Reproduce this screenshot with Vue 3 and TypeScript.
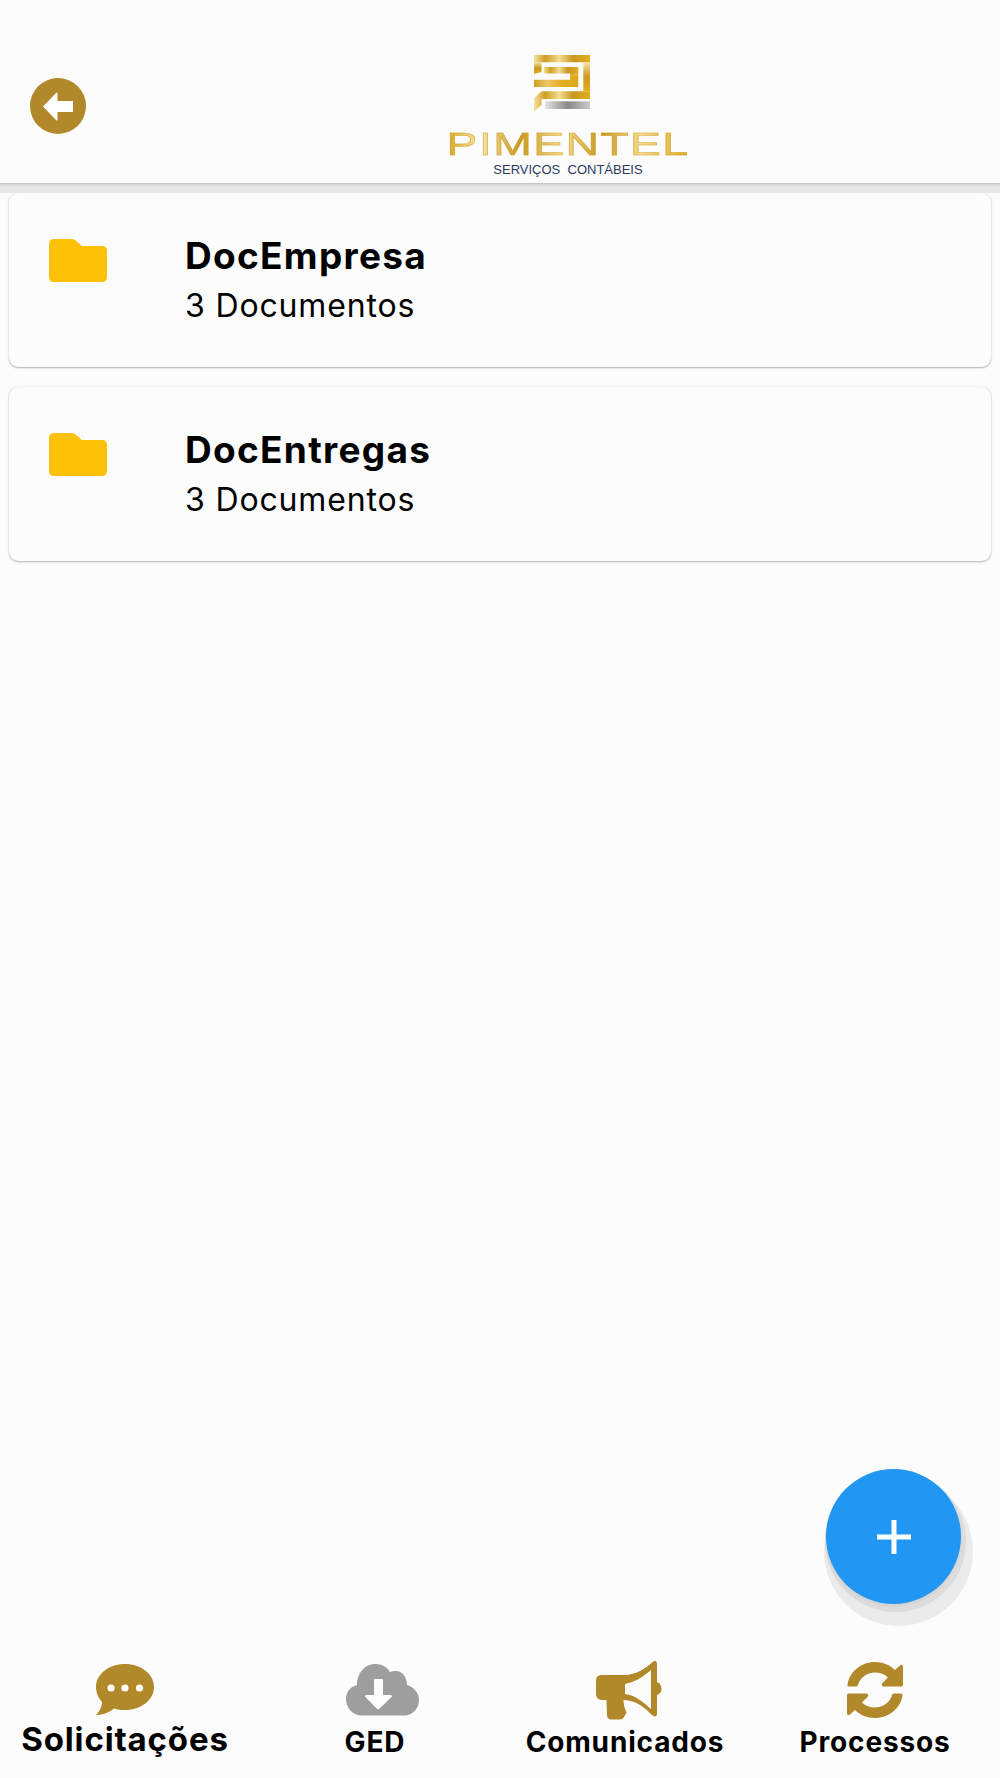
<script setup lang="ts">
interface Folder { name: string; count: string }
interface Tab { label: string; icon: string; active?: boolean }

const folders: Folder[] = [
  { name: 'DocEmpresa', count: '3 Documentos' },
  { name: 'DocEntregas', count: '3 Documentos' },
]

const tabs: Tab[] = [
  { label: 'Solicitações', icon: 'chat', active: true },
  { label: 'GED', icon: 'cloud' },
  { label: 'Comunicados', icon: 'horn' },
  { label: 'Processos', icon: 'sync' },
]
</script>

<template>
  <div class="screen">
    <header class="topbar">
      <button class="back" aria-label="Voltar">
        <svg viewBox="0 0 56 56" width="56" height="56">
          <circle cx="28" cy="28" r="28" fill="#b1882a" />
          <path d="M13 28.500 L26 15 Q27.500 13.500 27.500 16 V23 H43 V34 H27.500 V41 Q27.500 43.500 26 42 Z" fill="#fff" />
        </svg>
      </button>
      <div class="logo">
        <svg class="mark" viewBox="0 0 56 57" width="56" height="57">
          <defs>
            <linearGradient id="gold" x1="0" y1="0" x2="1" y2="0">
              <stop offset="0" stop-color="#f6e3a4" />
              <stop offset="0.2" stop-color="#cf9e22" />
              <stop offset="0.45" stop-color="#f3dc94" />
              <stop offset="0.7" stop-color="#c9981f" />
              <stop offset="1" stop-color="#e3ae22" />
            </linearGradient>
            <linearGradient id="goldB" x1="0" y1="0" x2="1" y2="0">
              <stop offset="0" stop-color="#cf9e22" />
              <stop offset="0.3" stop-color="#ecc867" />
              <stop offset="0.6" stop-color="#e3ae22" />
              <stop offset="1" stop-color="#e0a91c" />
            </linearGradient>
            <linearGradient id="goldV" x1="0" y1="0" x2="0" y2="1">
              <stop offset="0" stop-color="#f5e3a6" />
              <stop offset="0.5" stop-color="#c9981f" />
              <stop offset="1" stop-color="#e3ae22" />
            </linearGradient>
            <linearGradient id="silver" x1="0" y1="0" x2="1" y2="0">
              <stop offset="0" stop-color="#e4e4e4" />
              <stop offset="0.5" stop-color="#8a8a8a" />
              <stop offset="1" stop-color="#c8c8c8" />
            </linearGradient>
          </defs>
          <rect x="0" y="0" width="56" height="7.300" fill="url(#gold)" />
          <path fill="url(#goldV)" d="M0 7.300 H7.500 V17 L0 19 Z" />
          <path fill="url(#gold)" d="M9.500 12 H44.300 V19.700 H36 V18.500 H9.500 Z" />
          <path fill="url(#goldB)" d="M0 24.700 H36 V19.700 H44.300 V32 H0 Z" />
          <path fill="url(#goldV)" d="M49.300 7.300 H56 V36.300 H49.300 Z" />
          <path fill="url(#gold)" d="M7.500 36.300 H56 V44 H7.500 V50 L0 56.500 V43 Z" />
          <rect x="11" y="46.300" width="45" height="7.700" fill="url(#silver)" />
        </svg>
        <div class="brand">PIMENTEL</div>
        <div class="tagline">SERVIÇOS&nbsp; CONTÁBEIS</div>
      </div>
    </header>

    <main class="list">
      <article v-for="f in folders" :key="f.name" class="card">
        <svg class="folder" viewBox="0 0 58 43" width="58" height="43">
          <path d="M5 0 H23 Q25 0 26.500 1.500 L33 7 H53 Q58 7 58 12 V38 Q58 43 53 43 H5 Q0 43 0 38 V5 Q0 0 5 0 Z" fill="#ffc107" />
        </svg>
        <div class="text">
          <div class="name">{{ f.name }}</div>
          <div class="count">{{ f.count }}</div>
        </div>
      </article>
    </main>

    <button class="fab" aria-label="Adicionar">
      <svg viewBox="0 0 34 34" width="34" height="34">
        <path d="M14.500 0 H19.500 V14.500 H34 V19.500 H19.500 V34 H14.500 V19.500 H0 V14.500 H14.500 Z" fill="#fff" />
      </svg>
    </button>

    <nav class="tabs">
      <div v-for="t in tabs" :key="t.label" class="tab" :class="{ active: t.active, ['tab-' + t.icon]: true }">
        <svg v-if="t.icon === 'chat'" viewBox="0 0 58 52" width="58" height="52">
          <path d="M29 0 C45 0 58 10 58 23 C58 36 45 46 29 46 C25 46 21.500 45.500 18 44.500 C13 48.500 7 51 0 51 C3 48 5.500 44 6 38 C2.500 34 0 29 0 23 C0 10 13 0 29 0 Z" fill="#b1882a" />
          <circle cx="15" cy="24" r="3.600" fill="#fff" />
          <circle cx="29" cy="24" r="3.600" fill="#fff" />
          <circle cx="43.500" cy="24" r="3.600" fill="#fff" />
        </svg>
        <svg v-else-if="t.icon === 'cloud'" viewBox="0 0 73 52" width="73" height="52">
          <path d="M16 51.500 C7 51.500 0 44 0 35 C0 28 4 23 11 21 C11 9 19 0 29 0 C36 0 41 3 44 8 C46 7 48 7 50 7 C56 7 61 13 61 21 C68 23 73 29 73 36 C73 44 67 51.500 58 51.500 Z" fill="#9e9e9e" />
          <path d="M28 16 Q28 15 29 15 H36 Q37 15 37 16 V31 H44 Q47 31 45.500 33 L33.500 44.500 Q32 46 30.500 44.500 L19.500 33 Q18 31 21 31 H28 Z" fill="#fff" />
        </svg>
        <svg v-else-if="t.icon === 'horn'" viewBox="0 0 66 59" width="66" height="59">
          <path fill-rule="evenodd" d="M58 0 C60 -1 61 1 61 3 V21 C64 22 65.500 25 65.500 28 C65.500 31 64 33 61 34 V53 C61 56 58 56 56 54 C49 47 41 40 29 39 L27.500 39 C27.500 43 28.500 47 30 50 C31 52 30 53 29 54 C28 57 26 58.500 24 58.500 H15 C12 58.500 11 56 11 54 L10.500 39 H6 C2 39 0 36 0 33 V20 C0 16 2 14 6 14 H28 C40 14 50 7 58 0 Z M55 9 C47 16 39 21 29 23 V33 C39 34 47 41 55 48 Z" fill="#b1882a" />
        </svg>
        <svg v-else viewBox="0 0 56 56" width="56" height="56">
          <path d="M0.500 23 C2 10 14 0 28 0 C36 0 43 3 48 8 L53 3.500 C54.500 2 56 3 56 5 V23 Q56 24.500 54 24.500 H37 C35 24.500 34 22.500 35.500 21 L41 15.500 C37.500 12 33 10.500 28 10.500 C20 10.500 13 15.500 11 23 Q10.500 24.500 9 24.500 H2 Q0.300 24.500 0.500 23 Z" fill="#b1882a" />
          <path d="M55.500 33 C54 46 42 56 28 56 C20 56 13 53 8 48 L3 52.500 C1.500 54 0 53 0 51 V33 Q0 31.500 2 31.500 H19 C21 31.500 22 33.500 20.500 35 L15 40.500 C18.500 44 23 45.500 28 45.500 C36 45.500 43 40.500 45 33 Q45.500 31.500 47 31.500 H54 Q55.700 31.500 55.500 33 Z" fill="#b1882a" />
        </svg>
        <span class="label">{{ t.label }}</span>
      </div>
    </nav>
  </div>
</template>

<style>
html, body { margin: 0; background: #fcfcfc; }
</style>

<style scoped>
.screen {
  position: relative;
  width: 1000px;
  height: 1778px;
  display: flex;
  flex-direction: column;
  background: #fcfcfc;
  font-family: Inter, "Liberation Sans", sans-serif;
  color: #000;
  overflow: hidden;
}
.topbar {
  height: 183px;
  flex: none;
  box-sizing: border-box;
  display: flex;
  align-items: flex-start;
  background: #fcfcfc;
  box-shadow: 0 1px 1px #c8c8c8, 0 3px 0 #dcdcdc, 0 10px 0 #e8e8e8;
  position: relative;
  z-index: 1;
}
.back {
  border: 0;
  padding: 0;
  background: none;
  margin: 78px 0 0 30px;
  width: 56px;
  height: 56px;
  display: block;
}
.back svg { display: block; }
.logo {
  margin: 55px 0 0 362px;
  width: 240px;
  display: flex;
  flex-direction: column;
  align-items: center;
}
.mark { display: block; margin-left: -13px; }
.brand {
  margin-top: 20px;
  font-family: "Liberation Sans", sans-serif;
  font-size: 32px;
  line-height: 24px;
  height: 24px;
  letter-spacing: 1px;
  transform: scaleX(1.445);
  background: linear-gradient(90deg, #d9a520, #f7e7ae 14%, #c9981f 30%, #f5dd90 48%, #c9961e 64%, #f3dc94 80%, #e0a91c);
  -webkit-background-clip: text;
  background-clip: text;
  color: transparent;
  -webkit-text-stroke: 0.5px rgba(205, 160, 40, 0.75);
  white-space: nowrap;
}
.tagline {
  margin-top: 6px;
  font-family: "Liberation Sans", sans-serif;
  font-size: 13px;
  line-height: 15px;
  color: #2b3a5c;
  white-space: nowrap;
}
.list {
  padding: 10px 9px 0;
  display: flex;
  flex-direction: column;
  gap: 19.500px;
}
.card {
  height: 174px;
  box-sizing: border-box;
  display: flex;
  align-items: flex-start;
  padding: 46px 0 0 40px;
  border-radius: 9px;
  background: #fcfcfc;
  box-shadow: 0 1px 2px rgba(0, 0, 0, 0.28), 0 0 1px rgba(0, 0, 0, 0.18);
}
.folder { flex: none; display: block; }
.text { margin-left: 78px; }
.name {
  font-size: 37px;
  font-weight: 700;
  line-height: 42px;
  letter-spacing: 1.300px;
  margin-top: -4px;
}
.count {
  font-size: 32px;
  font-weight: 400;
  line-height: 38px;
  margin-top: 10px;
  letter-spacing: 0.85px;
}
.fab {
  position: absolute;
  left: 826px;
  top: 1469px;
  width: 135px;
  height: 135px;
  padding: 0;
  border: 0;
  border-radius: 50%;
  background: #2196f3;
  display: flex;
  align-items: center;
  justify-content: center;
  box-shadow: 0 2px 0 1px #d6d6d6, 2px 5px 0 3px #dcdcdc, 5px 15px 0 7px #ebebeb;
}
.fab svg { display: block; }
.tabs {
  position: absolute;
  left: 0;
  right: 0;
  bottom: 0;
  height: 118px;
  display: grid;
  grid-template-columns: 250px 250px 250px 250px;
}
.tab {
  display: flex;
  flex-direction: column;
  align-items: center;
  justify-content: flex-start;
}
.tab svg { display: block; }
.tab-chat svg { margin-top: 4px; }
.tab-cloud svg { margin-top: 4px; margin-left: 14px; }
.tab-horn svg { margin-top: 1px; margin-left: 7px; }
.tab-sync svg { margin-top: 2px; }
.label {
  font-size: 28px;
  font-weight: 700;
  line-height: 34px;
  letter-spacing: 0.85px;
  white-space: nowrap;
}
.tab-chat .label { font-size: 33px; line-height: 38px; margin-top: 4px; }
.tab-cloud .label { margin-top: 8.500px; }
.tab-horn .label { margin-top: 4.500px; }
.tab-sync .label { margin-top: 6.500px; }
</style>
